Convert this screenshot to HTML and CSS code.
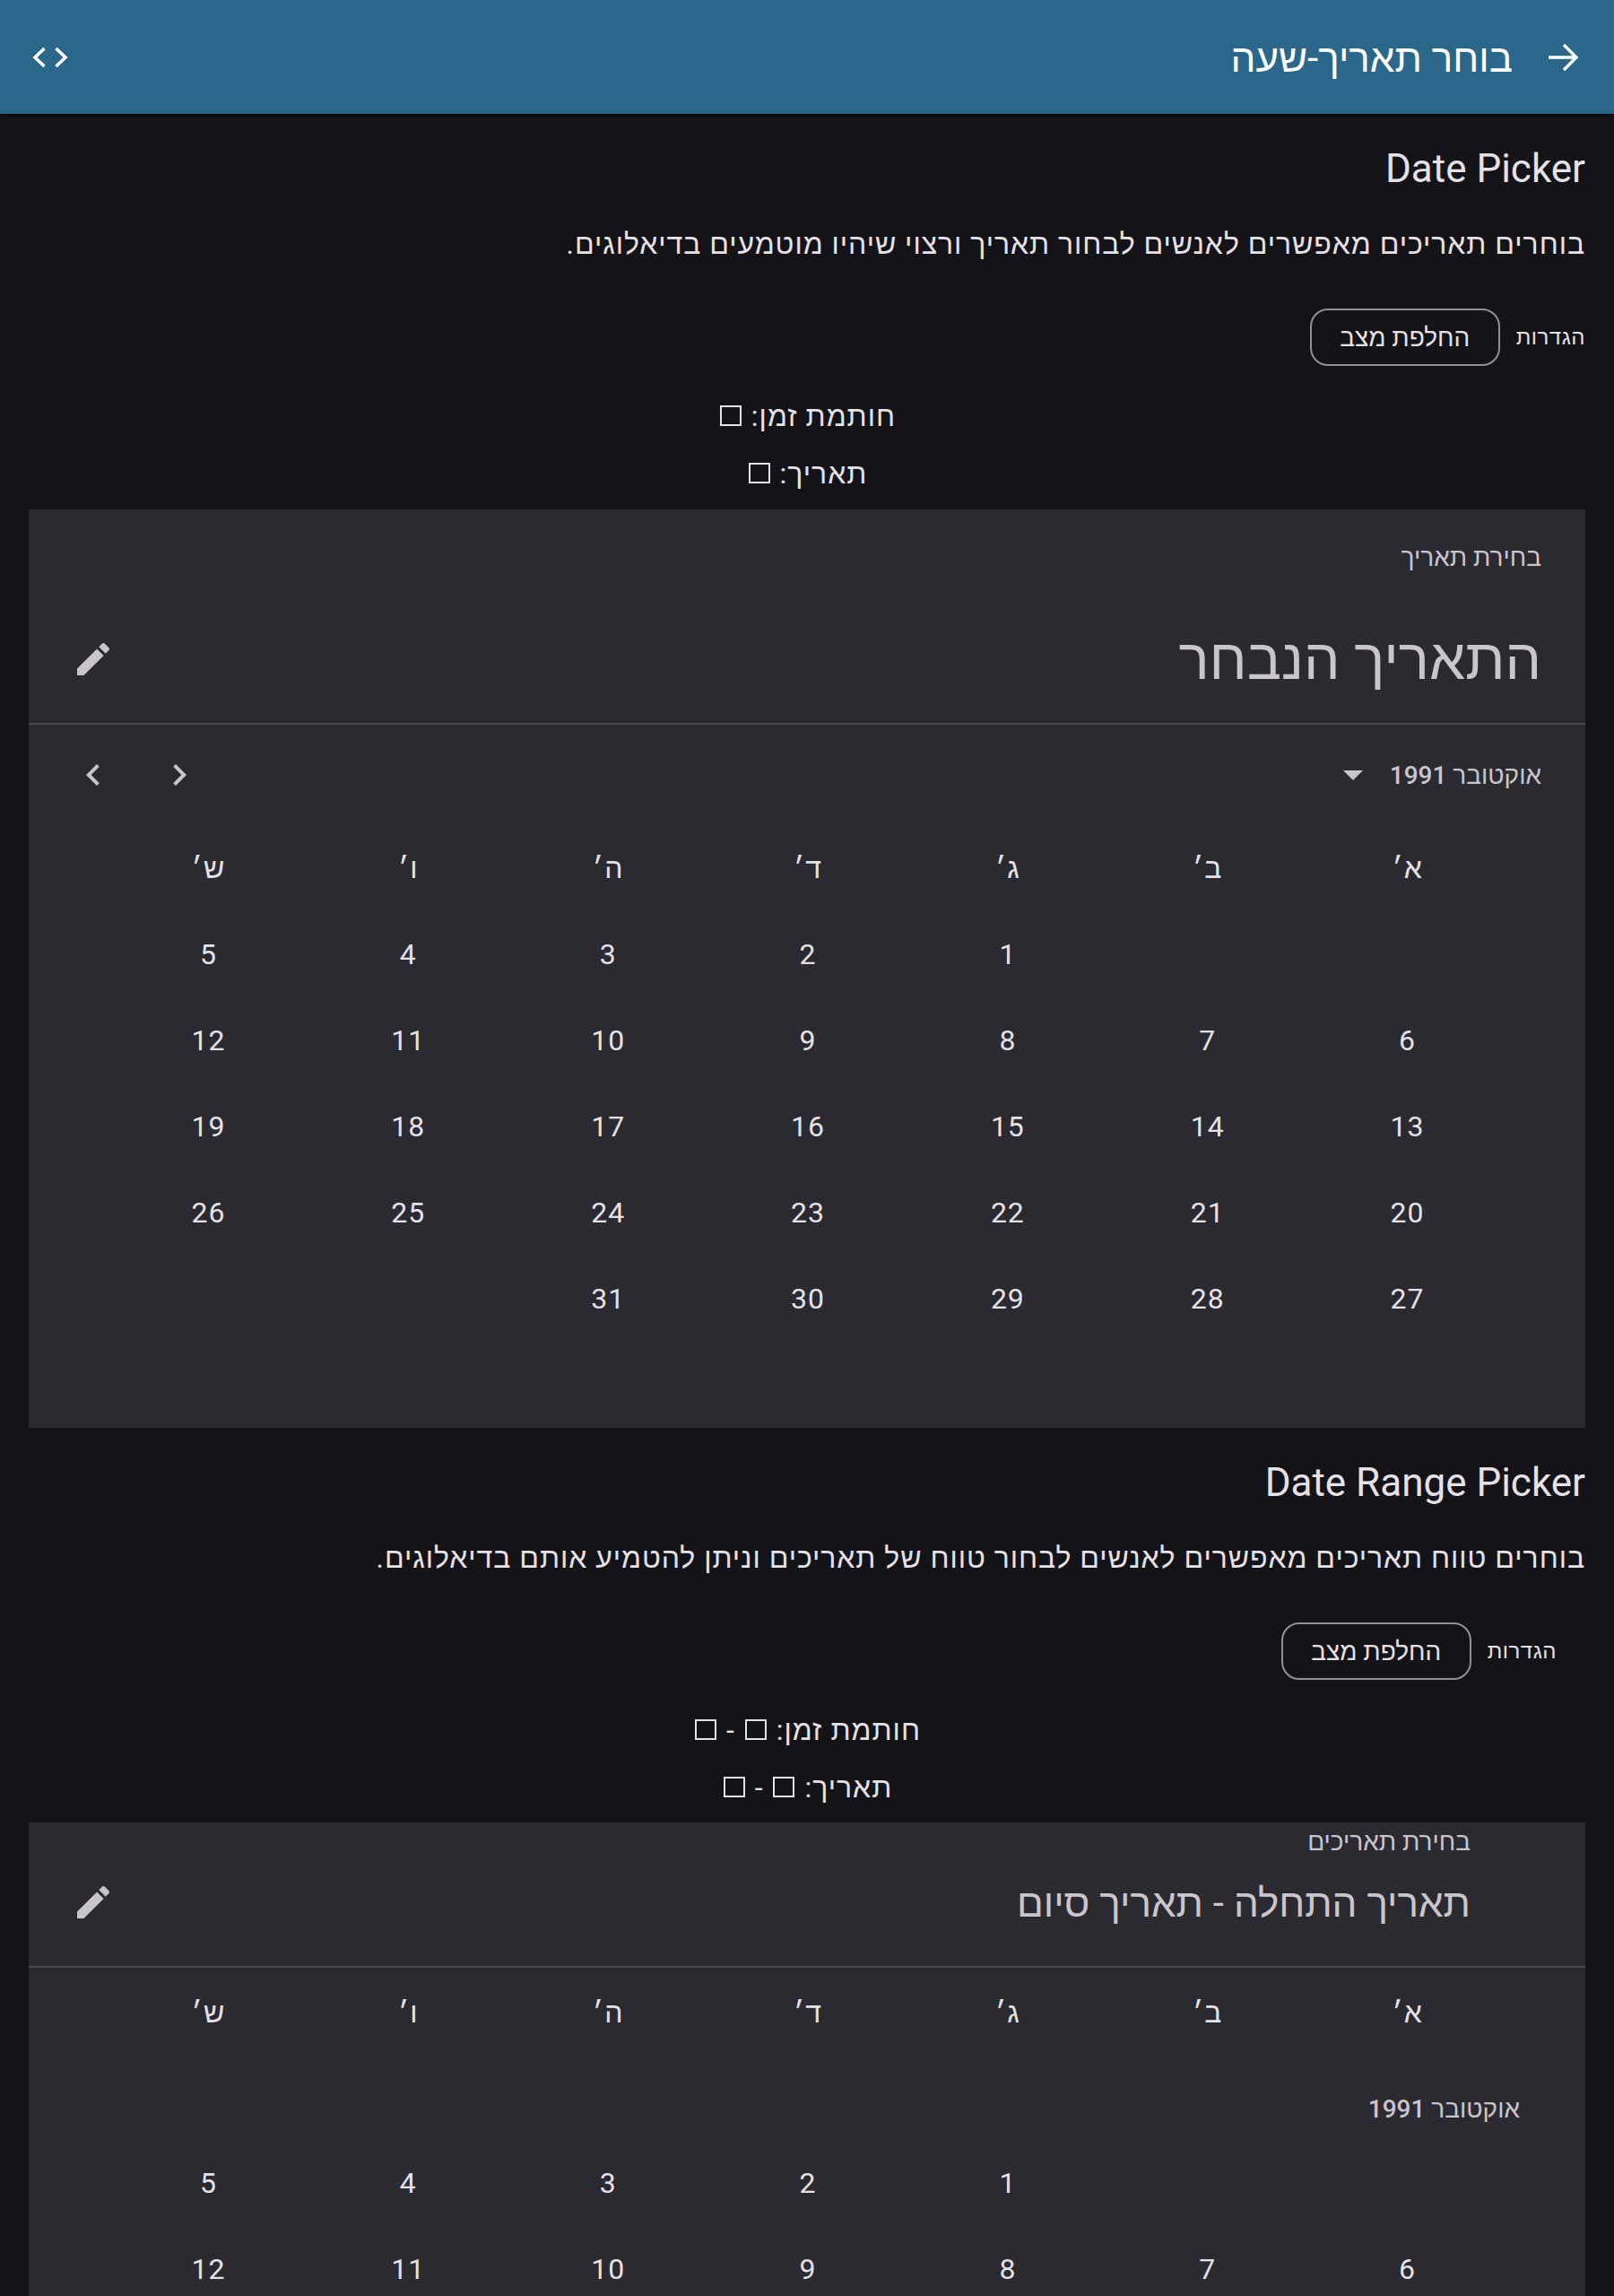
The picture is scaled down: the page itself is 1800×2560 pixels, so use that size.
FILE: index.html
```html
<!DOCTYPE html>
<html lang="he" dir="rtl">
<head>
    <meta charset="utf-8">
    <title>בוחר תאריך-שעה</title>
    <link rel="stylesheet" href="styles.css">
</head>
<body>
    <div class="page">
        <header class="topbar">
            <svg class="back" viewBox="0 0 24 24"><path d="M4 12h15M12.5 5l7 7-7 7"/></svg>
            <h1>בוחר תאריך-שעה</h1>
            <svg class="code" viewBox="0 0 40 24"><path d="M13.5 2L3 12l10.5 10M26.5 2L37 12 26.5 22"/></svg>
        </header>

        <section class="demo">
            <h2 dir="ltr">Date Picker</h2>
            <p class="desc">בוחרים תאריכים מאפשרים לאנשים לבחור תאריך ורצוי שיהיו מוטמעים בדיאלוגים.</p>
            <div class="settings">
                <span>הגדרות</span>
                <button>החלפת מצב</button>
            </div>
            <div class="value">חותמת זמן: <i class="tofu"></i></div>
            <div class="value">תאריך: <i class="tofu"></i></div>
        </section>

        <div class="panel">
            <div class="head">
                <div class="label">בחירת תאריך</div>
                <div class="head-row">
                    <div class="big">התאריך הנבחר</div>
                    <svg class="pencil" viewBox="0 0 24 24"><path d="M3 17.25V21h3.75L17.81 9.94l-3.75-3.75L3 17.25zM20.71 7.04a1 1 0 0 0 0-1.41l-2.34-2.34a1 1 0 0 0-1.41 0l-1.83 1.83 3.75 3.75 1.83-1.83z"/></svg>
                </div>
            </div>
            <div class="month-row">
                <div class="month">אוקטובר 1991</div>
                <span class="caret"></span>
                <div class="nav">
                    <svg viewBox="0 0 24 24"><path d="M10 6L8.59 7.41 13.17 12l-4.58 4.59L10 18l6-6z"/></svg>
                    <svg viewBox="0 0 24 24"><path d="M15.41 7.41L14 6l-6 6 6 6 1.41-1.41L10.83 12z"/></svg>
                </div>
            </div>
            <div class="grid weekdays">
                <span>א׳</span><span>ב׳</span><span>ג׳</span><span>ד׳</span><span>ה׳</span><span>ו׳</span><span>ש׳</span>
            </div>
            <div class="grid days">
                <span></span><span></span><span>1</span><span>2</span><span>3</span><span>4</span><span>5</span>
                <span>6</span><span>7</span><span>8</span><span>9</span><span>10</span><span>11</span><span>12</span>
                <span>13</span><span>14</span><span>15</span><span>16</span><span>17</span><span>18</span><span>19</span>
                <span>20</span><span>21</span><span>22</span><span>23</span><span>24</span><span>25</span><span>26</span>
                <span>27</span><span>28</span><span>29</span><span>30</span><span>31</span><span></span><span></span>
            </div>
        </div>

        <section class="demo">
            <h2 dir="ltr">Date Range Picker</h2>
            <p class="desc">בוחרים טווח תאריכים מאפשרים לאנשים לבחור טווח של תאריכים וניתן להטמיע אותם בדיאלוגים.</p>
            <div class="settings settings-range">
                <span>הגדרות</span>
                <button>החלפת מצב</button>
            </div>
            <div class="value">חותמת זמן: <i class="tofu"></i> - <i class="tofu"></i></div>
            <div class="value">תאריך: <i class="tofu"></i> - <i class="tofu"></i></div>
        </section>

        <div class="panel range">
            <div class="head">
                <div class="label">בחירת תאריכים</div>
                <div class="head-row">
                    <div class="big">תאריך התחלה - תאריך סיום</div>
                    <svg class="pencil" viewBox="0 0 24 24"><path d="M3 17.25V21h3.75L17.81 9.94l-3.75-3.75L3 17.25zM20.71 7.04a1 1 0 0 0 0-1.41l-2.34-2.34a1 1 0 0 0-1.41 0l-1.83 1.83 3.75 3.75 1.83-1.83z"/></svg>
                </div>
            </div>
            <div class="grid weekdays">
                <span>א׳</span><span>ב׳</span><span>ג׳</span><span>ד׳</span><span>ה׳</span><span>ו׳</span><span>ש׳</span>
            </div>
            <div class="month">אוקטובר 1991</div>
            <div class="grid days">
                <span></span><span></span><span>1</span><span>2</span><span>3</span><span>4</span><span>5</span>
                <span>6</span><span>7</span><span>8</span><span>9</span><span>10</span><span>11</span><span>12</span>
            </div>
        </div>
    </div>
</body>
</html>
```
FILE: styles.css
```css
html, body {
  margin: 0;
  background: #131318;
}
body {
  font-family: Roboto, "Noto Sans", sans-serif;
  color: #e5e1e6;
}
.page {
  width: 1800px;
  height: 2560px;
  overflow: hidden;
}

.topbar {
  height: 127px;
  display: flex;
  align-items: center;
  padding: 0 33px 0 36px;
  background: #2a678a;
  box-shadow: 0 2px 3px rgba(0, 0, 0, 0.5);
  color: #fff;
}
.topbar h1 {
  margin: 3px 0 0 auto;
  font-size: 44px;
  font-weight: 400;
}
.back {
  width: 48px;
  height: 48px;
  margin-left: 32px;
  fill: none;
  stroke: #fff;
  stroke-width: 1.7;
}
.code {
  width: 40px;
  height: 24px;
  fill: none;
  stroke: #fff;
  stroke-width: 3.6;
}

.demo {
  padding: 0 32px;
}
.demo h2 {
  margin: 0;
  padding-top: 32px;
  height: 58px;
  font-size: 44px;
  font-weight: 400;
  line-height: 58px;
  text-align: right;
}
.desc {
  margin: 0;
  padding-top: 31px;
  font-size: 32px;
  line-height: 48px;
  letter-spacing: 0.95px;
}
.settings {
  display: flex;
  align-items: center;
  gap: 18px;
  margin-top: 48px;
  font-size: 24px;
  letter-spacing: 0.5px;
}
.settings-range {
  padding-right: 32px;
}
.settings button {
  width: 212px;
  height: 64px;
  border: 2px solid #938f99;
  border-radius: 20px;
  background: none;
  color: #e5e1e6;
  font-family: inherit;
  font-size: 28px;
}
.value {
  height: 64px;
  line-height: 64px;
  font-size: 32px;
  letter-spacing: 1px;
  text-align: center;
}
.settings + .value {
  margin-top: 24px;
}
.tofu {
  display: inline-block;
  box-sizing: border-box;
  width: 24px;
  height: 23px;
  margin: 0 2px;
  border: 2px solid #e5e1e6;
}

.panel {
  margin: 8px 32px 0;
  height: 1024px;
  background: #2a2a30;
  color: #cac5cd;
  font-size: 32px;
}
.head {
  padding: 34px 49px 0 50px;
  height: 204px;
  border-bottom: 2px solid #48464f;
}
.label {
  font-size: 28px;
  line-height: 40px;
}
.head-row {
  display: flex;
  align-items: center;
  justify-content: space-between;
  margin-top: 52px;
}
.big {
  font-size: 64px;
  line-height: 84px;
}
.pencil {
  width: 48px;
  height: 48px;
  margin: -2px 0 0 -2px;
  fill: #cac5cd;
}
.month-row {
  display: flex;
  align-items: center;
  padding: 0 49px 0 50px;
  height: 112px;
}
.month {
  font-size: 28px;
  font-weight: 500;
}
.caret {
  margin-right: 30px;
  border: 11px solid transparent;
  border-top-color: #cac5cd;
  border-bottom: 0;
}
.nav {
  display: flex;
  gap: 48px;
  margin-right: auto;
  margin-left: -2px;
}
.nav svg {
  width: 48px;
  height: 48px;
  fill: #cac5cd;
}
.grid {
  display: grid;
  grid-template-columns: repeat(7, 1fr);
  padding: 0 87px 0 89px;
  letter-spacing: 1px;
  text-align: center;
}
.weekdays {
  color: #e5e1e6;
  height: 96px;
  line-height: 96px;
}
.days {
  grid-auto-rows: 96px;
  line-height: 96px;
  color: #e5e1e6;
}

.range {
  margin-top: 7px;
  height: auto;
}
.range .head {
  padding: 4px 50px 0;
  height: 156px;
}
.range .label {
  margin-right: 78px;
  line-height: 36px;
}
.range .head-row {
  margin-top: 18px;
}
.range .big {
  margin-right: 78px;
  font-size: 44px;
  line-height: 64px;
}
.range .weekdays {
  margin-top: 2px;
}
.range .month {
  padding: 40px 73px 0 0;
  height: 54px;
  line-height: 40px;
}
```
